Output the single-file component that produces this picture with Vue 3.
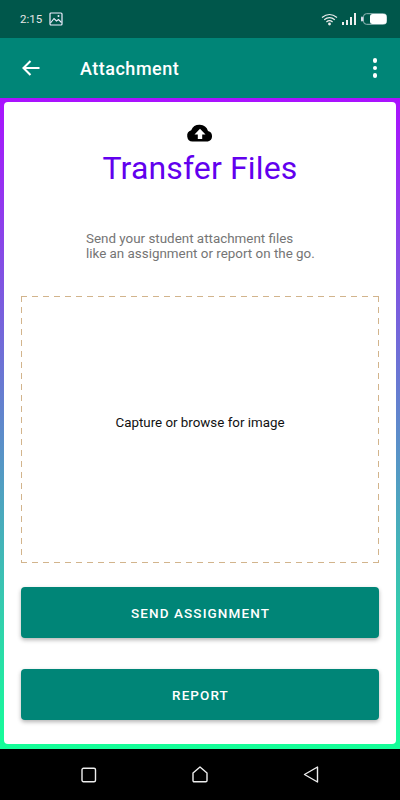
<script setup>
</script>

<template>
  <div class="screen">
    <div class="status">
      <div class="status-left">
        <span class="time">2:15</span>
        <svg width="14" height="14" viewBox="0 0 14 14" class="pic"><rect x="1" y="1" width="12" height="12" rx="1" fill="none" stroke="#eef" stroke-width="1.2"/><path d="M1.5 11 L5 6.5 L7.5 9 L9.5 7.5 L12.5 10.5" fill="none" stroke="#eef" stroke-width="1.1"/><circle cx="9.5" cy="4" r="1" fill="#eef"/></svg>
      </div>
      <div class="status-right">
        <svg width="17" height="13" viewBox="0 0 17 13"><g fill="none" stroke="#eee" stroke-width="1.2"><path d="M1 4.5 Q8.5 -1.5 16 4.5"/><path d="M3.2 6.8 Q8.5 2.4 13.8 6.8"/><path d="M5.4 9 Q8.5 6.4 11.6 9"/></g><circle cx="8.5" cy="11" r="1.4" fill="#eee"/></svg>
        <svg width="15" height="12" viewBox="0 0 15 12" class="sig"><g fill="#eee"><rect x="0" y="9" width="2" height="3"/><rect x="4" y="7" width="2" height="5"/><rect x="8" y="4" width="2" height="8"/><rect x="12" y="0" width="2" height="12"/></g></svg>
        <svg width="26" height="12" viewBox="0 0 26 12" class="bat"><rect x="0" y="3.5" width="2" height="5" rx="1" fill="#dde"/><rect x="2.5" y="0.7" width="23" height="10.6" rx="3" fill="none" stroke="#9bb" stroke-width="1"/><rect x="9" y="1" width="16.5" height="10" rx="2.5" fill="#fff"/></svg>
      </div>
    </div>
    <header class="appbar">
      <svg class="back" width="20" height="18" viewBox="0 0 20 18"><path d="M18.5 9 H2.5 M9.5 2 L2.5 9 L9.5 16" fill="none" stroke="#fff" stroke-width="2.1"/></svg>
      <h1 class="title">Attachment</h1>
      <div class="dots"><i></i><i></i><i></i></div>
    </header>
    <main class="grad">
      <section class="card">
        <svg class="cloud" width="28" height="18" viewBox="0 0 28 18"><path d="M6.5 17.5 A5.8 5.8 0 0 1 5.2 6.2 A9 9 0 0 1 22 7 A5.4 5.4 0 0 1 21.8 17.5 Z" fill="#000"/><path d="M14 4.8 L19.5 10.5 H16.2 V15 H11.8 V10.5 H8.5 Z" fill="#fff"/></svg>
        <h2 class="heading">Transfer Files</h2>
        <p class="desc">Send your student attachment files<br>like an assignment or report on the go.</p>
        <div class="drop">Capture or browse for image</div>
        <button class="btn first">SEND ASSIGNMENT</button>
        <button class="btn">REPORT</button>
      </section>
    </main>
    <nav class="nav">
      <svg width="16" height="16" viewBox="0 0 16 16"><rect x="1" y="1.2" width="13.5" height="13.5" rx="1.5" fill="none" stroke="#eee" stroke-width="1.4"/></svg>
      <svg width="16" height="17" viewBox="0 0 16 17"><path d="M1 7 L8 1 L15 7 V14.5 Q15 15.8 13.7 15.8 H2.3 Q1 15.8 1 14.5 Z" fill="none" stroke="#eee" stroke-width="1.4" stroke-linejoin="round"/></svg>
      <svg width="16" height="17" viewBox="0 0 16 17"><path d="M14.5 1 V16 L1.5 8.5 Z" fill="none" stroke="#eee" stroke-width="1.4" stroke-linejoin="round"/></svg>
    </nav>
  </div>
</template>

<style>
html, body { margin: 0; padding: 0; }
</style>

<style scoped>
.screen { width: 400px; height: 800px; display: flex; flex-direction: column; font-family: Roboto, sans-serif; overflow: hidden; background: #000; }
.status { height: 38px; flex: none; background: #00574b; display: flex; align-items: center; justify-content: space-between; padding: 0 13px 0 20px; box-sizing: border-box; color: #e6e6e6; }
.status-left { display: flex; align-items: center; gap: 7px; }
.time { font-size: 11.5px; }
.status-right { display: flex; align-items: center; gap: 4px; }
.appbar { height: 60px; flex: none; background: #008577; display: flex; align-items: center; padding: 0 23px 0 21px; box-sizing: border-box; color: #fff; }
.back { flex: none; }
.title { margin: 0 0 0 39px; flex: 1; font-size: 18px; font-weight: 500; letter-spacing: .5px; }
.dots { display: flex; flex-direction: column; gap: 3px; }
.dots i { width: 4.5px; height: 4.5px; border-radius: 50%; background: #fff; display: block; }
.grad { height: 651px; flex: none; box-sizing: border-box; padding: 4px 4px 5px; background: linear-gradient(180deg, #aa11ff 0%, #14ff98 100%); }
.card { height: 100%; background: #fff; border-radius: 4px; box-sizing: border-box; padding: 22px 17px 0; display: flex; flex-direction: column; align-items: center; }
.cloud { flex: none; }
.heading { margin: 7px 0 0; font-size: 32px; line-height: 38px; font-weight: 400; letter-spacing: .15px; color: #6200ee; }
.desc { margin: 44px 0 0; width: 100%; padding-left: 65px; box-sizing: border-box; font-size: 13.4px; line-height: 15px; color: #757575; }
.drop { margin-top: 35px; width: 358px; height: 267px; flex: none; box-sizing: border-box; padding-bottom: 15px; display: flex; align-items: center; justify-content: center; font-size: 13.35px; color: #111;
  background:
    repeating-linear-gradient(90deg, #d2b48c 0 6px, transparent 6px 11px) top left / 100% 1px no-repeat,
    repeating-linear-gradient(90deg, #d2b48c 0 6px, transparent 6px 11px) bottom left / 100% 1px no-repeat,
    repeating-linear-gradient(180deg, #d2b48c 0 6px, transparent 6px 11px) top left / 1px 100% no-repeat,
    repeating-linear-gradient(180deg, #d2b48c 0 6px, transparent 6px 11px) top right / 1px 100% no-repeat; }
.btn { width: 358px; height: 51px; flex: none; border: 0; border-radius: 4px; background: #008577; color: #fff; font-family: inherit; font-size: 13.5px; font-weight: 500; letter-spacing: 1.1px; text-indent: 1px; box-shadow: 0 2px 4px rgba(0,0,0,.3); margin-top: 31px; }
.btn.first { margin-top: 24px; }
.nav { flex: 1; background: #000; display: flex; align-items: center; justify-content: space-between; padding: 0 81px; }
</style>
